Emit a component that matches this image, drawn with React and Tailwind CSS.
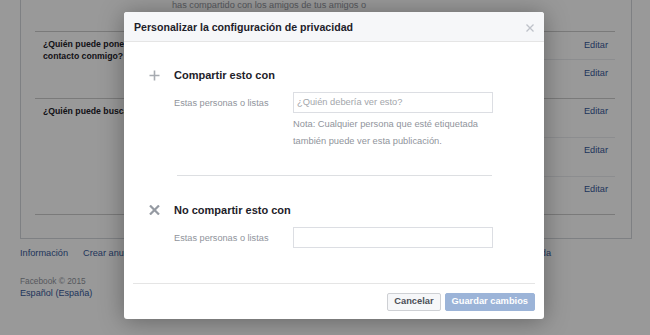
import React from 'react';

const PlusIcon = () => (
  <svg width="11" height="11" viewBox="0 0 11 11" className="shrink-0">
    <path d="M5.5 0.5v10M0.5 5.5h10" stroke="#a7abb1" strokeWidth="1.6" />
  </svg>
);

const CrossIcon = () => (
  <svg width="11" height="10" viewBox="0 0 11 10" className="shrink-0">
    <path d="M1 0.5l9 9M10 0.5l-9 9" stroke="#959aa2" strokeWidth="2.2" />
  </svg>
);

const EditRow = ({ height, pt = 'pt-[7px]', last }) => (
  <div
    className={`flex justify-end pr-[7px] ${pt} ${height} ${last ? '' : 'border-b border-[#e9ebee]'}`}
  >
    <span className="text-[9.2px] leading-[12px] text-[#365899]">Editar</span>
  </div>
);

const ShareSection = ({ icon, title, placeholder, note }) => (
  <div>
    <div className="flex items-center h-[14px]">
      <div className="w-[26px] pl-[1px] flex items-center">{icon}</div>
      <span className="text-[11px] font-bold leading-[14px] text-[#1d2129]">{title}</span>
    </div>
    <div className="flex items-center mt-[10px] pl-[26px]">
      <span className="w-[119px] pt-[2px] text-[9.2px] text-[#90949c]">Estas personas o listas</span>
      <div className="w-[200px] h-[21px] border border-[#dcdee3] bg-white flex items-center px-[3px] text-[9.3px] text-[#a3a6ab]">
        {placeholder}
      </div>
    </div>
    {note && (
      <div className="pl-[145px] mt-[3px] text-[9.3px] leading-[17px] text-[#90949c]">
        Nota: Cualquier persona que esté etiquetada
        <br />
        también puede ver esta publicación.
      </div>
    )}
  </div>
);

export default function App() {
  return (
    <div className="relative w-[650px] h-[335px] overflow-hidden bg-white font-['Liberation_Sans',Arial,sans-serif]">
      {/* page behind the dialog */}
      <div className="ml-[20px] w-[612px] border border-t-0 border-[#d3d6db] pl-[14px] pr-[16px] pb-[23px]">
        <div className="h-[33px] pl-[137px] border-b border-[#cccccc]">
          <div className="-mt-[1px] text-[9.2px] leading-[12px] text-[#90949c]">
            has compartido con los amigos de tus amigos o
          </div>
        </div>
        <div className="grid grid-cols-[137px_1fr] border-b border-[#cccccc]">
          <div className="pl-[8px] pt-[6px] text-[8.7px] font-bold leading-[12px] text-[#1d2129]">
            ¿Quién puede ponerse en
            <br />
            contacto conmigo?
          </div>
          <div>
            <EditRow height="h-[28px]" />
            <EditRow height="h-[38px]" last />
          </div>
        </div>
        <div className="grid grid-cols-[137px_1fr] border-b border-[#cccccc]">
          <div className="pl-[8px] pt-[6px] text-[8.7px] font-bold leading-[12px] text-[#1d2129]">
            ¿Quién puede buscarme?
          </div>
          <div>
            <EditRow height="h-[39px]" pt="pt-[6px]" />
            <EditRow height="h-[39px]" pt="pt-[6px]" />
            <EditRow height="h-[37px]" pt="pt-[6px]" last />
          </div>
        </div>
      </div>

      <div className="ml-[20px] mt-[8px] w-[531px] flex text-[9.2px] leading-[12px] text-[#365899]">
        <div className="flex gap-[15px]">
          <span>Información</span>
          <span>Crear anuncio</span>
          <span>Crear página</span>
          <span>Desarrolladores</span>
          <span>Empleo</span>
        </div>
        <span className="ml-auto">Ayuda</span>
      </div>
      <div className="ml-[20px] mt-[16px] text-[8.3px] leading-[12px] text-[#90949c]">Facebook © 2015</div>
      <div className="ml-[20px] text-[9.1px] leading-[12px] text-[#365899]">Español (España)</div>

      {/* dim layer */}
      <div className="absolute inset-0 bg-black/40" />

      {/* dialog */}
      <div className="absolute left-[124px] top-[12px] w-[420px] h-[307px] bg-white rounded-[3px] shadow-[0_2px_24px_rgba(0,0,0,0.35)] flex flex-col">
        <div className="h-[30px] pt-[3px] flex items-center justify-between pl-[10px] pr-[10px] bg-[#f6f7f9] border-b border-[#e5e5e5] rounded-t-[3px]">
          <span className="text-[10.6px] font-bold text-[#1d2129]">Personalizar la configuración de privacidad</span>
          <svg width="8" height="8" viewBox="0 0 8 8">
            <path d="M0.5 0.5l7 7M7.5 0.5l-7 7" stroke="#bec2c9" strokeWidth="1.3" />
          </svg>
        </div>

        <div className="pl-[24px] pt-[26px]">
          <ShareSection icon={<PlusIcon />} title="Compartir esto con" placeholder="¿Quién debería ver esto?" note />
          <div className="ml-[29px] mt-[25px] w-[315px] h-px bg-[#dddfe2]" />
          <div className="mt-[27px]">
            <ShareSection icon={<CrossIcon />} title="No compartir esto con" placeholder="" />
          </div>
        </div>

        <div className="mt-auto mx-[9px] border-t border-[#e5e5e5] pt-[9px] pb-[8px] flex justify-end gap-[4px]">
          <button className="h-[18px] px-[6px] border border-[#ced0d4] bg-[#f6f7f9] rounded-[2px] text-[9.3px] font-bold text-[#4b4f56]">
            Cancelar
          </button>
          <button className="h-[18px] px-[6px] border border-[#9cb4d8] bg-[#9cb4d8] rounded-[2px] text-[9.3px] font-bold text-white">
            Guardar cambios
          </button>
        </div>
      </div>
    </div>
  );
}
